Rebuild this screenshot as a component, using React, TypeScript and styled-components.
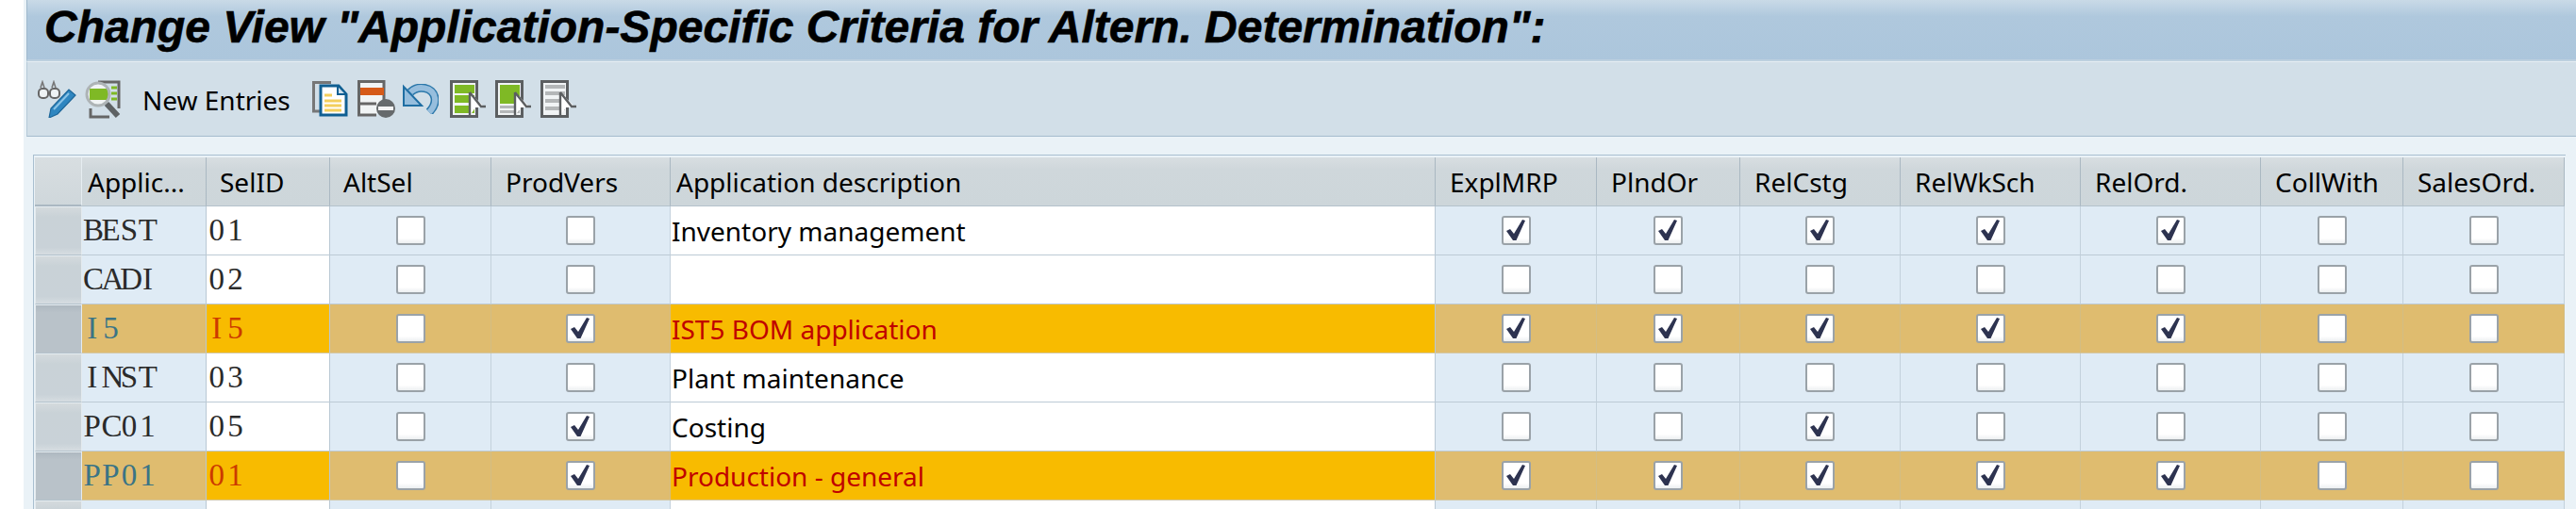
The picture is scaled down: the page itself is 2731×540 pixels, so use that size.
import React from 'react';
import styled, { createGlobalStyle } from 'styled-components';

const GRID = '51px 132px 131px 171px 190px 811px 171px 152px 170px 191px 191px 151px 171px';
const UI_FONT = '"Noto Sans", "Liberation Sans", sans-serif';

const headers = [
  { label: 'Applic...', pad: 6 },
  { label: 'SelID', pad: 14 },
  { label: 'AltSel', pad: 14 },
  { label: 'ProdVers', pad: 15 },
  { label: 'Application description', pad: 6 },
  { label: 'ExplMRP', pad: 15 },
  { label: 'PlndOr', pad: 15 },
  { label: 'RelCstg', pad: 15 },
  { label: 'RelWkSch', pad: 15 },
  { label: 'RelOrd.', pad: 15 },
  { label: 'CollWith', pad: 15 },
  { label: 'SalesOrd.', pad: 15 },
];

type RowData = {
  app: string;
  sel: string;
  altSel: boolean;
  prodVers: boolean;
  desc: string;
  flags: boolean[];
  hot?: boolean;
};

const rows: RowData[] = [
  { app: 'BEST', sel: '01', altSel: false, prodVers: false, desc: 'Inventory management', flags: [true, true, true, true, true, false, false] },
  { app: 'CADI', sel: '02', altSel: false, prodVers: false, desc: '', flags: [false, false, false, false, false, false, false] },
  { app: 'I5', sel: 'I5', altSel: false, prodVers: true, desc: 'IST5 BOM application', flags: [true, true, true, true, true, false, false], hot: true },
  { app: 'INST', sel: '03', altSel: false, prodVers: false, desc: 'Plant maintenance', flags: [false, false, false, false, false, false, false] },
  { app: 'PC01', sel: '05', altSel: false, prodVers: true, desc: 'Costing', flags: [false, false, true, false, false, false, false] },
  { app: 'PP01', sel: '01', altSel: false, prodVers: true, desc: 'Production - general', flags: [true, true, true, true, true, false, false], hot: true },
  { app: '', sel: '', altSel: false, prodVers: false, desc: '', flags: [false, false, false, false, false, false, false] },
];

// the serif font has no fixed pitch, so each character gets its own slot
const Code = ({ text }: { text: string }) => (
  <>
    {text.split('').map((c, i) => (
      <Glyph key={i}>{c}</Glyph>
    ))}
  </>
);

const App = () => {
  return (
    <Page>
      <GlobalStyle />
      <Shell>
        <TitleBar>
          <Title>Change View "Application-Specific Criteria for Altern. Determination":</Title>
        </TitleBar>
        <Toolbar>
          <DisplayChangeIcon />
          <FindIcon />
          <ToolText>New Entries</ToolText>
          <CopyIcon />
          <DeleteIcon />
          <UndoIcon />
          <SelectIcon mode="all" />
          <SelectIcon mode="block" />
          <SelectIcon mode="none" />
        </Toolbar>
        <Content>
          <Table>
            <HeaderRow>
              <Corner />
              {headers.map((h) => (
                <HeaderCell key={h.label} $pad={h.pad}>
                  {h.label}
                </HeaderCell>
              ))}
            </HeaderRow>
            {rows.map((row, i) => (
              <Row key={i}>
                <RowSelector $hot={row.hot} />
                <CodeCell $hot={row.hot}>
                  <Code text={row.app} />
                </CodeCell>
                <InputCell $hot={row.hot}>
                  <Code text={row.sel} />
                </InputCell>
                <CheckCell $hot={row.hot}>
                  <CheckBox checked={row.altSel} />
                </CheckCell>
                <CheckCell $hot={row.hot}>
                  <CheckBox checked={row.prodVers} />
                </CheckCell>
                <DescCell $hot={row.hot}>{row.desc}</DescCell>
                {row.flags.map((f, j) => (
                  <CheckCell key={j} $hot={row.hot}>
                    <CheckBox checked={f} />
                  </CheckCell>
                ))}
              </Row>
            ))}
          </Table>
        </Content>
      </Shell>
    </Page>
  );
};

export default App;

const CheckBox = ({ checked }: { checked: boolean }) => (
  <Box>
    {checked && (
      <svg width="29" height="29" viewBox="0 0 29 29">
        <path d="M4 15 L8 13 L12 18 L21 3 L24 4 L14.5 25 L11 25 Z" fill="#2d3350" />
      </svg>
    )}
  </Box>
);

const DisplayChangeIcon = () => (
  <Icon width="41" height="40" viewBox="0 0 41 40" $gap={9}>
    <path d="M3 8 L5 2 L7 8 M15 8 L17 2 L19 8" fill="none" stroke="#777" strokeWidth="1.6" />
    <rect x="1" y="9" width="10" height="10" rx="4" fill="#eef2f4" stroke="#666" strokeWidth="2" />
    <rect x="13" y="9" width="10" height="10" rx="4" fill="#eef2f4" stroke="#666" strokeWidth="2" />
    <path d="M12 40 L14 30 L33 10 L40 16 L21 36 Z" fill="#2f86c0" stroke="#1d6699" strokeWidth="1.2" />
    <path d="M17 31 L33 14" stroke="#8cc4e6" strokeWidth="2" />
  </Icon>
);

const FindIcon = () => (
  <Icon width="38" height="41" viewBox="0 0 38 41" $gap={23}>
    <path d="M14 2 H36 V30" fill="none" stroke="#666" strokeWidth="3" />
    <path d="M6 30 V39 H26" fill="none" stroke="#666" strokeWidth="3" />
    <circle cx="14" cy="15" r="12" fill="#f1f4f5" />
    <rect x="5" y="9" width="21" height="12" fill="#7fb925" />
    <path d="M28 8 H34 M28 14 H34 M28 20 H34" stroke="#7fb925" strokeWidth="3" />
    <circle cx="14" cy="15" r="12" fill="none" stroke="#aeb4b6" strokeWidth="3" />
    <path d="M23 25 L35 38" stroke="#5e6264" strokeWidth="6" />
  </Icon>
);

const CopyIcon = () => (
  <Icon width="38" height="38" viewBox="0 0 38 38" $gap={10}>
    <path d="M20 1.5 H1.5 V32 H8" fill="none" stroke="#777" strokeWidth="3" />
    <path d="M9 5 H28 L36 14 V36 H9 Z" fill="#fff" stroke="#0f5f92" strokeWidth="3" />
    <path d="M27 6 V14 H35" fill="#cfe0ec" stroke="#0f5f92" strokeWidth="2" />
    <path d="M13 15 H21" stroke="#f3cf5c" strokeWidth="3" />
    <path d="M13 21 H31 M13 26 H31 M13 31 H31" stroke="#f3cf5c" strokeWidth="3" />
  </Icon>
);

const DeleteIcon = () => (
  <Icon width="40" height="40" viewBox="0 0 40 40" $gap={8}>
    <path d="M28 22 V1.5 H1.5 V37 H20" fill="#f1f4f5" stroke="#666" strokeWidth="3" />
    <rect x="3" y="8" width="25" height="8" fill="#d65a18" />
    <path d="M3 25 H20" stroke="#666" strokeWidth="3" />
    <circle cx="30" cy="30" r="10" fill="#666a6c" />
    <rect x="22" y="28" width="16" height="4" fill="#f4f4f4" />
  </Icon>
);

const UndoIcon = () => (
  <Icon width="38" height="32" viewBox="0 0 38 32" $gap={12}>
    <path d="M8 9 C16 1 32 3 34 15 C35 22 32 26 28 30" fill="none" stroke="#2c78aa" strokeWidth="9" />
    <path d="M8 9 C16 1 32 3 34 15 C35 22 32 26 28 30" fill="none" stroke="#97bedd" strokeWidth="6" />
    <path d="M1 3 V23 H20 Z" fill="#97bedd" stroke="#1f6ea3" strokeWidth="2" />
  </Icon>
);

const SelectIcon = ({ mode }: { mode: 'all' | 'block' | 'none' }) => (
  <Icon width="38" height="40" viewBox="0 0 38 40" $gap={10}>
    <rect x="1.5" y="1.5" width="27" height="37" fill="#f1f4f5" stroke="#5c5f61" strokeWidth="3" />
    {mode === 'all' && (
      <>
        <rect x="5" y="5" width="21" height="9" fill="#7fb925" />
        <rect x="5" y="16" width="21" height="8" fill="#7fb925" />
        <rect x="5" y="27" width="21" height="8" fill="#7fb925" />
      </>
    )}
    {mode === 'block' && (
      <>
        <rect x="5" y="5" width="21" height="20" fill="#7fb925" />
        <rect x="5" y="27" width="21" height="3" fill="#b4b7b8" />
        <rect x="5" y="32" width="21" height="3" fill="#b4b7b8" />
      </>
    )}
    {mode === 'none' && (
      <>
        <rect x="5" y="5" width="21" height="4" fill="#b4b7b8" />
        <rect x="5" y="12" width="21" height="4" fill="#b4b7b8" />
        <rect x="5" y="20" width="21" height="4" fill="#b4b7b8" />
        <rect x="5" y="28" width="21" height="4" fill="#b4b7b8" />
      </>
    )}
    <path d="M21 13 L37 29 H27 L21 38 Z" fill="#fff" />
    <path d="M21 13 V40 M21 13 L33 28 H38" fill="none" stroke="#5c5f61" strokeWidth="2.4" />
  </Icon>
);

const GlobalStyle = createGlobalStyle`
  html,
  body {
    margin: 0;
    padding: 0;
    height: 540px;
    overflow: hidden;
    background: #fff;
  }
`;

const Page = styled.div`
  width: 2731px;
  height: 540px;
  padding-left: 25px;
  box-sizing: border-box;
  overflow: hidden;
  background: #fff;
`;

const Shell = styled.div`
  height: 540px;
  padding-left: 3px;
  background: #eaf2f7;
`;

const TitleBar = styled.div`
  height: 65px;
  box-sizing: border-box;
  display: flex;
  align-items: center;
  padding: 0 0 6px 18px;
  border-left: 1px solid #9fb8cc;
  border-bottom: 2px solid #bdd0df;
  background: linear-gradient(#c9dae7 0%, #afc8dd 28%, #acc6dc 100%);
`;

const Title = styled.h1`
  margin: 0;
  font-family: 'Liberation Sans', Arial, sans-serif;
  font-size: 48px;
  font-weight: 700;
  font-style: italic;
  color: #000;
  white-space: nowrap;
  -webkit-text-stroke: 0.6px #000;
`;

const Toolbar = styled.div`
  height: 80px;
  box-sizing: border-box;
  display: flex;
  align-items: center;
  padding-left: 11px;
  background: #d2dfe8;
  border-left: 1px solid #b6c9d8;
  border-top: 1px solid #e6eef3;
  border-bottom: 1px solid #a5bccd;
`;

const Icon = styled.svg<{ $gap: number }>`
  flex: none;
  margin-right: ${({ $gap }) => $gap}px;
`;

const ToolText = styled.span`
  font-family: ${UI_FONT};
  font-size: 28px;
  color: #000;
  margin-right: 23px;
  padding-top: 2px;
  white-space: nowrap;
`;

const Content = styled.div`
  padding: 19px 0 0 7px;
`;

const Table = styled.div`
  width: 2684px;
  padding-top: 2px;
  border-top: 1px solid #a9bfd0;
  border-left: 1px solid #a9bfd0;
`;

const HeaderRow = styled.div`
  display: grid;
  grid-template-columns: ${GRID};
  height: 52px;
`;

const Row = styled.div`
  display: grid;
  grid-template-columns: ${GRID};
  height: 52px;
`;

const Corner = styled.div`
  margin-left: 1px;
  border-right: 1px solid #e6edf1;
  background: linear-gradient(#d8dee1, #cfd7db);
  border-bottom: 2px solid #aab8c2;
`;

const HeaderCell = styled.div<{ $pad: number }>`
  display: flex;
  align-items: center;
  padding-left: ${({ $pad }) => $pad}px;
  box-sizing: border-box;
  font-family: ${UI_FONT};
  font-size: 28px;
  color: #000;
  white-space: nowrap;
  overflow: hidden;
  border-right: 1px solid #aab8c2;
  border-bottom: 1px solid #b4c2cc;
  background: linear-gradient(#d8dee1 0%, #cfd7db 25%, #cdd6da 100%);
`;

const RowSelector = styled.div<{ $hot?: boolean }>`
  margin-left: 1px;
  border: 1px solid #e4ebef;
  border-bottom-color: #b4c2cc;
  box-sizing: border-box;
  background: ${({ $hot }) => ($hot ? 'linear-gradient(#aeb8c0, #b9c2c9 15%, #b9c2c9)' : 'linear-gradient(#d4dadd, #c9d2d7 20%, #c9d2d8 85%, #d6dde1)')};
`;

const cellBase = `
  display: flex;
  align-items: center;
  box-sizing: border-box;
  overflow: hidden;
  white-space: nowrap;
`;

const Glyph = styled.span`
  flex: none;
  width: 19.6px;
  text-align: center;
`;

const CodeCell = styled.div<{ $hot?: boolean }>`
  ${cellBase}
  padding-left: 1px;
  font-family: 'Liberation Serif', serif;
  font-size: 33px;
  color: ${({ $hot }) => ($hot ? '#3a7486' : '#2a2a2a')};
  background: ${({ $hot }) => ($hot ? '#dfbc6f' : '#dfebf5')};
  border-right: 1px solid #b9c8d4;
  border-bottom: 1px solid ${({ $hot }) => ($hot ? '#d3c8a6' : '#bccad5')};
`;

const InputCell = styled.div<{ $hot?: boolean }>`
  ${cellBase}
  padding-left: 1px;
  font-family: 'Liberation Serif', serif;
  font-size: 33px;
  color: ${({ $hot }) => ($hot ? '#cc3a00' : '#2a2a2a')};
  background: ${({ $hot }) => ($hot ? '#f8bb00' : '#fff')};
  border-right: 1px solid #b9c8d4;
  border-bottom: 1px solid ${({ $hot }) => ($hot ? '#d3c8a6' : '#bccad5')};
`;

const DescCell = styled.div<{ $hot?: boolean }>`
  ${cellBase}
  padding-left: 1px;
  font-family: ${UI_FONT};
  font-size: 28px;
  color: ${({ $hot }) => ($hot ? '#c00000' : '#000')};
  background: ${({ $hot }) => ($hot ? '#f8bb00' : '#fff')};
  border-right: 1px solid #b9c8d4;
  border-bottom: 1px solid ${({ $hot }) => ($hot ? '#d3c8a6' : '#bccad5')};
`;

const CheckCell = styled.div<{ $hot?: boolean }>`
  ${cellBase}
  justify-content: center;
  background: ${({ $hot }) => ($hot ? '#dfbc6f' : '#dfebf5')};
  border-right: 1px solid ${({ $hot }) => ($hot ? '#d3bd84' : '#c3d1dc')};
  border-bottom: 1px solid ${({ $hot }) => ($hot ? '#d3c8a6' : '#bccad5')};
`;

const Box = styled.div`
  width: 31px;
  height: 31px;
  box-sizing: border-box;
  border: 2px solid #9aa2a8;
  border-radius: 3px;
  background: linear-gradient(#fff 80%, #eceff1);
  display: flex;
  align-items: center;
  justify-content: center;
  svg {
    flex: none;
  }
`;
